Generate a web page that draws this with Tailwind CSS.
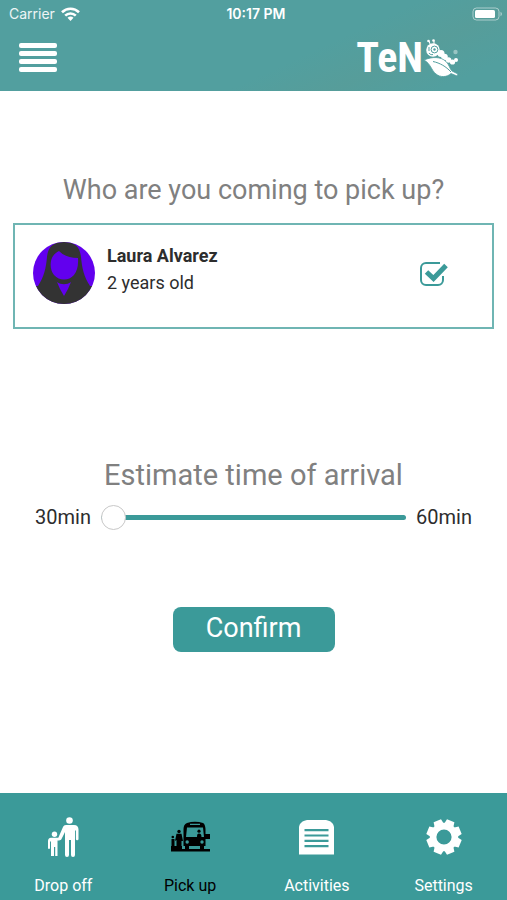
<!DOCTYPE html>
<html lang="en">
<head>
    <meta charset="UTF-8">
    <meta name="viewport" content="width=device-width, initial-scale=1.0">
    <title>Pick up</title>
    <script src="https://cdn.jsdelivr.net/npm/@tailwindcss/browser@4"></script>
</head>
<body class="min-h-screen flex flex-col bg-white text-[#2d2d2d] font-['Roboto',sans-serif]">
    <!-- Header -->
    <header class="bg-[#529f9f] bg-[linear-gradient(155deg,transparent_60%,#5d9a9366_75%,transparent_90%)] text-white pb-3">
        <!-- Status bar -->
        <div class="grid grid-cols-3 items-center h-7 pl-[9px] pr-1 font-['Inter',sans-serif] text-sm">
            <div class="flex items-center gap-1.5 text-white/90">
                <span>Carrier</span>
                <svg class="w-[19px] h-[14px]" viewBox="0 0 19 14" fill="none" stroke="white" stroke-width="2.6">
                    <path d="M1 5.2a12.2 12.2 0 0 1 17 0"/>
                    <path d="M4.2 8.6a7.6 7.6 0 0 1 10.6 0"/>
                    <path d="M9.5 14l-3-3.2a4.4 4.4 0 0 1 6 0z" fill="white" stroke="none"/>
                </svg>
            </div>
            <span class="text-center font-semibold">10:17 PM</span>
            <svg class="w-[31px] h-[14px] justify-self-end" viewBox="0 0 31 14">
                <rect x="1" y="1" width="26" height="12" rx="3.5" fill="none" stroke="white" stroke-opacity=".5"/>
                <rect x="3" y="3" width="20" height="8" rx="1.5" fill="white"/>
                <path d="M28.5 4.8c2 .8 2 3.6 0 4.4z" fill="white" fill-opacity=".5"/>
            </svg>
        </div>
        <!-- Menu and logo -->
        <div class="flex items-center justify-between pl-[19px] pr-12 h-[51px] pt-2">
            <button type="button" aria-label="Menu" class="flex flex-col gap-[3px]">
                <span class="block w-[38px] h-[5px] rounded-xs bg-white"></span>
                <span class="block w-[38px] h-[5px] rounded-xs bg-white"></span>
                <span class="block w-[38px] h-[5px] rounded-xs bg-white"></span>
                <span class="block w-[38px] h-[5px] rounded-xs bg-white"></span>
            </button>
            <a href="#" aria-label="TeN" class="flex items-center">
                <span class="font-['Roboto_Condensed','Lato',sans-serif] font-bold text-[42px] leading-10">TeN</span>
                <svg class="w-9 h-10" viewBox="0 0 36 40" fill="white">
                    <!-- Caterpillar -->
                    <circle cx="10" cy="12" r="6.8"/>
                    <circle cx="11.5" cy="11.5" r="3.4" fill="none" stroke="#529f9f" stroke-width="1"/>
                    <circle cx="11.5" cy="11.5" r="1.2" fill="#529f9f"/>
                    <path d="M6 9v4M6 15c1 1.500 2.500 2 4 1.500" fill="none" stroke="#529f9f"/>
                    <path d="M7 6L6 3M11 6V3" stroke="white"/>
                    <circle cx="5.500" cy="3" r="1.300"/>
                    <circle cx="10.500" cy="2.500" r="1.300"/>
                    <circle cx="18" cy="15.500" r="3.500"/>
                    <circle cx="21.500" cy="19" r="3.300"/>
                    <circle cx="25.500" cy="22" r="2.800"/>
                    <circle cx="29.500" cy="24" r="2.600"/>
                    <circle cx="33" cy="22" r="2"/>
                    <!-- Leaf -->
                    <path d="M1 22c8-3.500 17-3.500 22 1.500 3.500 3.500 3.500 7 6 9.500l6 3-1 2-6-2.500c-4 4-11 4-15 .5C8 32 8 26 1 22z" stroke="#529f9f" stroke-width=".8"/>
                    <path d="M10 23.500c7 1.500 13 5 18 10.500" fill="none" stroke="#529f9f" stroke-width="1"/>
                    <circle cx="32.500" cy="14" r="2.200" fill-opacity=".4"/>
                </svg>
            </a>
        </div>
    </header>

    <!-- Pick up form -->
    <form class="flex-1 flex flex-col px-[13px] pt-[81px]">
        <h1 class="text-[27px] leading-9 text-center text-[#808080]">Who are you coming to pick up?</h1>
        <label class="mt-[15px] flex items-start border-2 border-[#6fb5b3] h-[106px] pt-[17px] pl-[18px] pr-11">
            <svg class="size-[62px] shrink-0" viewBox="0 0 62 62">
                <clipPath id="avatar"><circle cx="31" cy="31" r="31"/></clipPath>
                <g clip-path="url(#avatar)">
                    <rect width="62" height="62" fill="#6200ee"/>
                    <path d="M31 0C19 0 15 6 14 15c-1 11-3 20-9 29H0v18h62V44h-5c-6-9-8-18-9-29C47 6 43 0 31 0z" fill="#333"/>
                    <path d="M26 9c5 5 11 7 19 7 .5 8-1 13-4 17-3 3-6 4.500-10 4.500S24 36 21 33c-3-4-4-9-3-14 1-5 4-8 8-10z" fill="#6200ee"/>
                    <path d="M24 40c4 3 10 3 14 0l-3 7-4 7-4-7z" fill="#6200ee"/>
                </g>
            </svg>
            <span class="ml-3 flex-1 text-lg leading-[27px]">
                <span class="block font-bold">Laura Alvarez</span>
                <span class="block">2 years old</span>
            </span>
            <span class="grid mt-5">
                <input type="checkbox" checked class="peer col-start-1 row-start-1 appearance-none w-7 h-6">
                <svg class="col-start-1 row-start-1 w-7 h-6 pointer-events-none" viewBox="0 0 28 24" fill="none" stroke="#3b9a99">
                    <path d="M20 1H6a5 5 0 0 0-5 5v12a5 5 0 0 0 5 5h12a5 5 0 0 0 5-5v-4" stroke-width="2"/>
                    <path d="M6.500 10l7 6.500L26 3.500" stroke-width="5"/>
                </svg>
            </span>
        </label>

        <h2 class="mt-32 text-[29px] leading-9 text-center text-[#808080]">Estimate time of arrival</h2>
        <div class="mt-2 flex items-center gap-2.5 px-[22px] text-xl leading-8">
            <label for="arrival">30min</label>
            <input type="range" id="arrival" min="30" max="60" value="30" class="flex-1 min-w-0 appearance-none h-[5px] rounded-full bg-[#3b9a99] [&::-webkit-slider-thumb]:appearance-none [&::-webkit-slider-thumb]:size-[25px] [&::-webkit-slider-thumb]:rounded-full [&::-webkit-slider-thumb]:bg-white [&::-webkit-slider-thumb]:border [&::-webkit-slider-thumb]:border-[#c8c8c8]">
            <span>60min</span>
        </div>

        <button type="submit" class="mt-[74px] self-center w-[162px] h-[45px] pb-1 rounded-lg bg-[#3b9a99] text-white text-[27px] leading-9">Confirm</button>
    </form>

    <!-- Tab bar -->
    <nav class="grid grid-cols-4 h-[107px] pt-6 bg-[#3b9a99] text-white text-base leading-6 text-center">
        <a href="#" class="flex flex-col items-center gap-[17px]">
            <svg class="w-8 h-10" viewBox="0 0 32 40" fill="white">
                <circle cx="22.500" cy="3.500" r="3.300"/>
                <path d="M19 8h8c3 0 4.500 2 4.500 4.500V22a1.300 1.300 0 0 1-2.600 0v-8.500H28V38a1.900 1.900 0 0 1-4 0V23h-2v15a1.900 1.900 0 0 1-4 0V15l-3.500 7c-.6 1-1.200 1.400-2.500 1.400h-1.500V39H8.200v-9H7v9H4V24.500H3V31a1 1 0 0 1-2 0v-7c0-2 1-3.300 3-3.300h7.300L16 10c.6-1.300 1.500-2 3-2z"/>
                <circle cx="7.500" cy="17.300" r="2.700"/>
            </svg>
            <span>Drop off</span>
        </a>
        <a href="#" aria-current="page" class="flex flex-col items-center gap-[17px] text-black">
            <svg class="w-10 h-10" viewBox="0 0 40 40" fill="black">
                <!-- Kerb and people -->
                <path d="M1 29h11v3h28v2.500H1z"/>
                <circle cx="9" cy="14.500" r="1.700"/>
                <path d="M6.500 16.800h5l1.500 7.200h-1.500V29H6.500v-6l-1.500 1z"/>
                <circle cx="2.800" cy="20" r="1.300"/>
                <path d="M1.500 22H4.500v7H1.500z"/>
                <!-- Bus -->
                <path fill-rule="evenodd" d="M17 6c5-1.600 11-1.600 16 0 1.600.8 2.300 3 2.500 6v5H40v5h-4.500v7H34v4h-4v-4H19v4h-4v-4h-1.500V12c.2-3 .9-5 3.500-6zM20 6.800v1.300h10V6.800zM17 10.500L16 20h18l-1-9.500z"/>
                <path d="M27 20c0-3 .5-3.500 2-3.500s2.500.5 2.500 3.500z"/>
                <circle cx="29" cy="14.200" r="1.600"/>
                <circle cx="17.200" cy="25" r="1.700" fill="#3b9a99"/>
                <circle cx="32" cy="25" r="1.700" fill="#3b9a99"/>
            </svg>
            <span>Pick up</span>
        </a>
        <a href="#" class="flex flex-col items-center gap-[17px]">
            <svg class="w-[35px] h-10" viewBox="0 0 35 40">
                <path d="M0 37.500V10c1-4 3-6 8-7h19c5 1 7 3 8 7v27.500z" fill="white"/>
                <path d="M5.500 13.200h24M5.500 18.500h24M5.500 23.800h24M5.500 29.100h24" stroke="#3b9a99" stroke-width="2.200"/>
            </svg>
            <span>Activities</span>
        </a>
        <a href="#" class="flex flex-col items-center gap-[17px]">
            <svg class="w-9 h-10" viewBox="-18 -20 36 40" fill="white">
                <path id="tooth" d="M-5-12l1-5.500h8l1 5.500z" transform="rotate(22.500)"/>
                <use href="#tooth" transform="rotate(45)"/>
                <use href="#tooth" transform="rotate(90)"/>
                <use href="#tooth" transform="rotate(135)"/>
                <use href="#tooth" transform="rotate(180)"/>
                <use href="#tooth" transform="rotate(225)"/>
                <use href="#tooth" transform="rotate(270)"/>
                <use href="#tooth" transform="rotate(315)"/>
                <circle r="10.900" fill="none" stroke="white" stroke-width="6.600"/>
            </svg>
            <span>Settings</span>
        </a>
    </nav>
</body>
</html>
